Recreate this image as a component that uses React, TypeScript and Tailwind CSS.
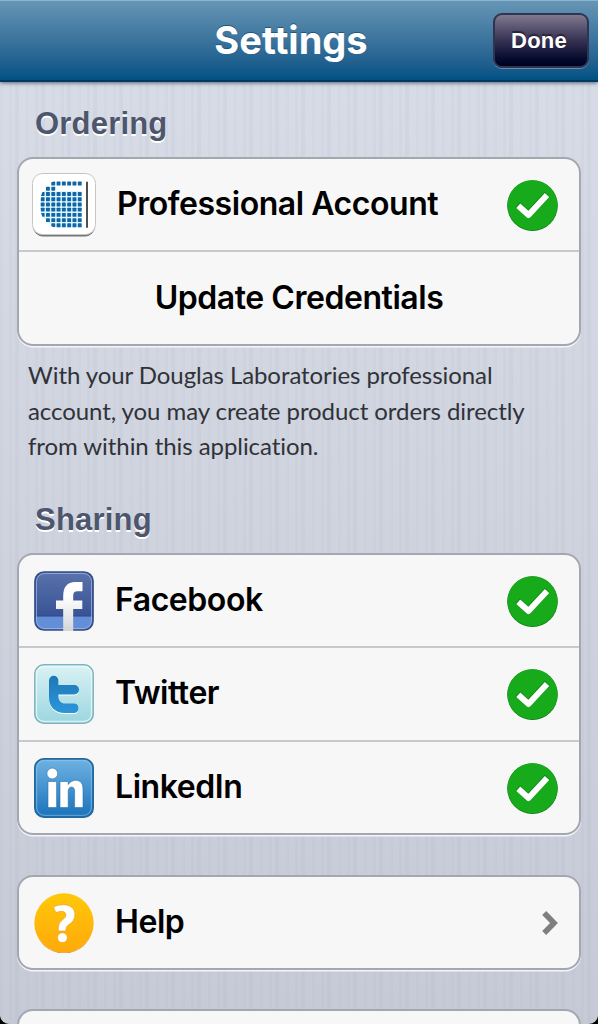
// src/App.tsx
import type { ReactNode } from "react";
import clsx from "clsx";

const LABEL = "font-['Inter',sans-serif] text-[32px] leading-[40px] font-semibold tracking-[-0.45px] text-black";

// [first, last] dot column for each row of the Douglas mark
const DOTS: [number, number][] = [
  [2, 7],
  [1, 2],
  [0, 7],
  [0, 7],
  [0, 7],
  [0, 7],
  [0, 7],
  [1, 7],
  [2, 7],
];

function DouglasIcon() {
  return (
    <svg viewBox="0 0 64 64" className="h-16 w-16 shrink-0">
      <defs>
        <clipPath id="dgClip">
          <path d="M52 7H28C14 8 8 19 8 31.5s6 22.5 18 23.5h26z" />
        </clipPath>
      </defs>
      <rect x="1" y="2" width="62" height="61.5" rx="10" fill="#777" />
      <rect x="0.5" y="0.5" width="63" height="61" rx="10" fill="#fff" stroke="#c6c6c6" />
      {/* tinted ground behind the dots */}
      <path d="M49.5 18H12C9 24 8 30 8.5 36c1 9 8 17 18 18.5h23z" fill="#dff6fc" />
      <g clipPath="url(#dgClip)" fill="#0e66a6">
        {DOTS.map(([from, to], r) =>
          Array.from({ length: to - from + 1 }).map((_, i) => (
            <rect key={`${r}-${i}`} x={8.7 + (from + i) * 5.3} y={8.6 + r * 5.22} width="3.9" height="3.9" rx="0.6" />
          ))
        )}
      </g>
      <path d="M55 8.7v46" stroke="#222" strokeWidth="1.6" />
    </svg>
  );
}

function FacebookIcon() {
  return (
    <svg viewBox="0 0 60 60" className="h-[60px] w-[60px] shrink-0">
      <defs>
        <linearGradient id="fb" x1="0" y1="0" x2="0" y2="1">
          <stop offset="0" stopColor="#5b73ad" />
          <stop offset="0.7" stopColor="#3a5597" />
        </linearGradient>
        <linearGradient id="fbF" x1="0" y1="0" x2="0" y2="1">
          <stop offset="0.3" stopColor="#fff" />
          <stop offset="1" stopColor="#d5d5d7" />
        </linearGradient>
        <clipPath id="fbClip">
          <rect x="1" y="1" width="58" height="58" rx="9" />
        </clipPath>
      </defs>
      <g clipPath="url(#fbClip)">
        <rect width="60" height="60" fill="url(#fb)" />
        <rect y="45" width="60" height="15" fill="#628fd8" />
        <path d="M0 45h60" stroke="#2c4783" />
      </g>
      <rect x="2.5" y="2.5" width="55" height="55" rx="8" fill="none" stroke="#a9bce4" strokeOpacity="0.7" />
      <rect x="1" y="1" width="58" height="58" rx="9" fill="none" stroke="#344e87" strokeWidth="1.7" />
      <path d="M29.2 60V38H22v-8.5h7.2V25c0-9 4-14 12-14h7.3v9.2h-5c-3 0-4.3 1.3-4.3 4.5v4.8h9.1V38h-9.1v22z" fill="url(#fbF)" />
    </svg>
  );
}

function TwitterIcon() {
  return (
    <svg viewBox="0 0 60 60" className="h-[60px] w-[60px] shrink-0">
      <defs>
        <linearGradient id="tw" x1="0" y1="0" x2="0" y2="1">
          <stop offset="0" stopColor="#daf2f5" />
          <stop offset="1" stopColor="#9cd6df" />
        </linearGradient>
        <linearGradient id="twT" x1="0" y1="0" x2="0" y2="1">
          <stop offset="0" stopColor="#1e78b7" />
          <stop offset="1" stopColor="#2b96da" />
        </linearGradient>
      </defs>
      <rect x="0.8" y="0.8" width="58.4" height="58.4" rx="9" fill="url(#tw)" stroke="#7fb2bd" strokeWidth="1.5" />
      <rect x="2.5" y="2.5" width="55" height="55" rx="7.5" fill="none" stroke="#e6fafb" strokeOpacity="0.8" strokeWidth="1.3" />
      <path
        d="M15 16.5a4.7 4.7 0 0 1 9.4 0V21h16a4.6 4.6 0 0 1 0 9.4h-16v1.8c0 4.5 2.5 7.3 7 7.3h9a4.8 4.8 0 0 1 0 9.5H31c-10 0-16-6-16-15.5z"
        fill="#fff"
        transform="translate(0 1)"
      />
      <path
        d="M15 16.5a4.7 4.7 0 0 1 9.4 0V21h16a4.6 4.6 0 0 1 0 9.4h-16v1.8c0 4.5 2.5 7.3 7 7.3h9a4.8 4.8 0 0 1 0 9.5H31c-10 0-16-6-16-15.5z"
        fill="url(#twT)"
      />
    </svg>
  );
}

function LinkedInIcon() {
  return (
    <svg viewBox="0 0 60 60" className="h-[60px] w-[60px] shrink-0">
      <defs>
        <linearGradient id="li" x1="0" y1="0" x2="0" y2="1">
          <stop offset="0" stopColor="#6fb2e2" />
          <stop offset="1" stopColor="#1a72bb" />
        </linearGradient>
      </defs>
      <rect x="0.9" y="0.9" width="58.2" height="58.2" rx="9" fill="url(#li)" stroke="#24689f" strokeWidth="1.8" />
      <rect x="2.7" y="2.7" width="54.6" height="54.6" rx="7.5" fill="none" stroke="#9bcbed" strokeOpacity="0.6" />
      <g fill="#fff" stroke="#2a6fac" strokeWidth="0.6">
        <circle cx="18.3" cy="15.5" r="5.4" />
        <path d="M14 23.5h8.6v26H14z" />
        <path d="M26 23.5h8.2v3c2-2.6 4.4-4.2 7.6-4.2 5 0 7.2 3.6 7.2 9v18.2h-8.4V33.3c0-2.7-.9-4.2-3-4.2-2.3 0-3.4 1.8-3.4 4.6v15.8H26z" />
      </g>
    </svg>
  );
}

function HelpIcon() {
  return (
    <svg viewBox="0 0 60 60" className="h-[60px] w-[60px] shrink-0">
      <defs>
        <linearGradient id="help" x1="0" y1="0" x2="0" y2="1">
          <stop offset="0" stopColor="#ffc80a" />
          <stop offset="1" stopColor="#ffa90a" />
        </linearGradient>
      </defs>
      <circle cx="30" cy="30" r="29.7" fill="url(#help)" />
      <path d="M2 40a29.7 29.7 0 0 0 56 0a29.4 29.4 0 0 1-56 0" fill="#d98d10" />
      <g fill="#fff" stroke="#d9940c" strokeWidth="0.5">
        <path d="M19.5 14.2c3-1.7 6.5-2.4 10.2-2.4 6.6 0 11.2 3.8 11.2 9.7 0 4.5-2.2 7.5-5.6 9.8-2.7 1.8-3.5 3.3-3.5 6.7h-7.4c-.3-5.4.6-8.4 3.9-11 2.3-1.8 3.6-3 3.6-5 0-2.5-1.9-3.7-4.3-3.7-2 0-3.8.5-5.7 1.5z" />
        <circle cx="28.4" cy="44.7" r="4.9" />
      </g>
    </svg>
  );
}

function CheckBadge() {
  return (
    <svg viewBox="0 0 52 52" className="h-[52px] w-[52px] shrink-0">
      <circle cx="25.5" cy="26.6" r="25.3" fill="#0b7a10" />
      <circle cx="25.5" cy="26.2" r="25" fill="#17aa1b" />
      <path d="M13.3 28.2l8 7.5 16.7-18" fill="none" stroke="#0d8b12" strokeWidth="7" strokeLinejoin="round" strokeLinecap="square" />
      <path d="M13.5 28.8l8 7.2L38 18.2" fill="none" stroke="#fff" strokeWidth="6" strokeLinejoin="round" strokeLinecap="square" />
    </svg>
  );
}

function Chevron() {
  return (
    <svg viewBox="0 0 17 24" className="h-6 w-[17px] shrink-0">
      <path d="M2.2 2l9.8 10-9.8 10" fill="none" stroke="#7f7f7f" strokeWidth="5.6" />
    </svg>
  );
}

function Card({ children, className }: { children?: ReactNode; className?: string }) {
  return (
    <div
      className={clsx(
        "mx-[17px] shrink-0 rounded-[16px] border-2 border-[#a4a6b0] bg-[#f7f7f7] shadow-[0_1.5px_0_#f3f5fa]",
        className
      )}
    >
      {children}
    </div>
  );
}

type RowProps = {
  icon: ReactNode;
  title: string;
  trailing: ReactNode;
  className?: string;
};

function Row({ icon, title, trailing, className }: RowProps) {
  return (
    <div className={clsx("flex items-center pr-5", className)}>
      {icon}
      <span className={clsx(LABEL, "mb-0.5 ml-[21px] flex-1 whitespace-nowrap")}>{title}</span>
      {trailing}
    </div>
  );
}

function SectionTitle({ children, className }: { children: ReactNode; className?: string }) {
  return (
    <h2
      className={clsx(
        "pl-[35px] font-['Liberation_Sans',sans-serif] text-[31px] leading-9 font-bold tracking-[0.2px] text-[#4d566d] [text-shadow:0_2px_0_#fff]",
        className
      )}
    >
      {children}
    </h2>
  );
}

export default function App() {
  return (
    <div className="h-[1024px] w-[598px] overflow-hidden bg-black">
      <div className="flex h-full flex-col overflow-hidden rounded-b-[9px] bg-[repeating-linear-gradient(90deg,#7886a408_0_3px,transparent_3px_9px,#7886a40b_9px_12px,transparent_12px_15px,#7886a40f_15px_19px,transparent_19px_26px),linear-gradient(#d8dde7,#c6cad6)]">
        <header className="z-10 grid h-[82px] shrink-0 grid-cols-[1fr_auto_1fr] items-center border-t border-b-2 border-t-[#8eb4cc] border-b-[#04385c] bg-linear-to-b from-[#6696b5] to-[#005184] shadow-[0_1px_4px_#59617a]">
          <h1 className="col-start-2 mr-4 mb-0.5 font-['Inter',sans-serif] text-[38px] leading-[48px] font-bold whitespace-nowrap text-white [text-shadow:0_-1px_0_#20587c]">
            Settings
          </h1>
          <button className="mr-[9px] h-[55px] w-[96px] justify-self-end rounded-[9px] border-2 border-[#303450] bg-linear-to-b from-[#80798f] via-[#302b4d] via-55% to-[#000020] pr-1 font-['Liberation_Sans',sans-serif] text-[22px] font-bold tracking-[0.2px] text-white shadow-[0_1px_0_#668daa] [text-shadow:0_-2px_1px_#262239]">
            Done
          </button>
        </header>

        <SectionTitle className="mt-6">Ordering</SectionTitle>
        <Card className="mt-[15px] h-[189px]">
          <Row
            className="h-[91px] pt-px pl-[13px]"
            icon={<DouglasIcon />}
            title="Professional Account"
            trailing={<CheckBadge />}
          />
          <div className="flex h-[94px] items-center justify-center border-t-2 border-[#c8c9cd] pb-px">
            <span className={LABEL}>Update Credentials</span>
          </div>
        </Card>

        <p className="mt-[11px] ml-7 font-['Lato',sans-serif] text-[24px] leading-[35.5px] tracking-[-0.07px] whitespace-nowrap text-[#303238] [font-variant-ligatures:none]">
          With your Douglas Laboratories professional
          <br />
          account, you may create product orders directly
          <br />
          from within this application.
        </p>

        <SectionTitle className="mt-[38px]">Sharing</SectionTitle>
        <Card className="mt-[15px] h-[282px]">
          <Row className="h-[91px] pt-0.5 pl-[15px]" icon={<FacebookIcon />} title="Facebook" trailing={<CheckBadge />} />
          <Row
            className="h-[94px] border-t-2 border-[#c8c9cd] pt-px pl-[15px]"
            icon={<TwitterIcon />}
            title="Twitter"
            trailing={<CheckBadge />}
          />
          <Row
            className="h-[93px] border-t-2 border-[#c8c9cd] pt-0.5 pl-[15px]"
            icon={<LinkedInIcon />}
            title="LinkedIn"
            trailing={<CheckBadge />}
          />
        </Card>

        <Card className="mt-10 h-[95px]">
          <Row className="h-[91px] pt-px pl-[15px]" icon={<HelpIcon />} title="Help" trailing={<Chevron />} />
        </Card>

        <Card className="mt-[39px] h-[95px]" />
      </div>
    </div>
  );
}
